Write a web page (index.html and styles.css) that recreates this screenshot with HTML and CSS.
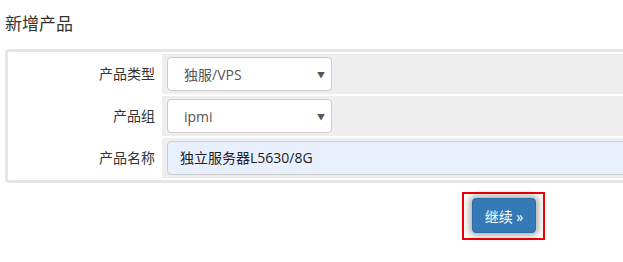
FILE: index.html
```html
<!DOCTYPE html>
<html>
<head>
<meta charset="utf-8">
<link rel="stylesheet" href="styles.css">
</head>
<body>
<div class="page">
  <h3 class="title">新增产品</h3>
  <div class="box">
    <div class="row">
      <div class="label">产品类型</div>
      <div class="field">
        <div class="select"><span>独服/VPS</span><span class="arrow">▼</span></div>
      </div>
    </div>
    <div class="row">
      <div class="label">产品组</div>
      <div class="field">
        <div class="select"><span>ipmi</span><span class="arrow">▼</span></div>
      </div>
    </div>
    <div class="row">
      <div class="label">产品名称</div>
      <div class="field">
        <div class="input">独立服务器L5630/8G</div>
      </div>
    </div>
  </div>
  <div class="actions">
    <div class="highlight">
      <button class="btn">继续 »</button>
    </div>
  </div>
</div>
</body>
</html>
```

FILE: styles.css
```css
html, body {
  margin: 0;
  padding: 0;
  background: #fff;
  overflow: hidden;
}
body {
  font-family: "Open Sans", "Noto Sans CJK SC", sans-serif;
  font-size: 14px;
  color: #333;
}
.page {
  width: 623px;
  height: 262px;
  overflow: hidden;
}
.title {
  margin: 0;
  padding: 12px 0 0 5px;
  height: 49px;
  box-sizing: border-box;
  font-size: 17px;
  font-weight: normal;
  line-height: 24px;
  color: #333;
}
.box {
  margin-left: 5px;
  width: 760px;
  border: 3px solid #e3e7e9;
  border-radius: 4px;
  padding: 2px;
  display: flex;
  flex-direction: column;
  gap: 2px;
  background: #fff;
}
.row {
  display: flex;
  gap: 2px;
  height: 40px;
}
.label {
  width: 150px;
  flex: none;
  text-align: right;
  padding-right: 5px;
  box-sizing: border-box;
  line-height: 40px;
  color: #333;
}
.field {
  flex: 1;
  background: #eeeeee;
  padding: 3px 5px;
  box-sizing: border-box;
}
.select {
  width: 165px;
  height: 34px;
  box-sizing: border-box;
  border: 1px solid #cccccc;
  border-radius: 4px;
  background: #fff;
  display: flex;
  align-items: center;
  justify-content: space-between;
  padding: 0 6px 0 16px;
  color: #555;
}
.arrow {
  font-size: 8px;
  color: #555;
}
.input {
  height: 34px;
  box-sizing: border-box;
  border: 1px solid #cccccc;
  border-radius: 4px;
  background: #e8f0fe;
  line-height: 32px;
  padding-left: 12px;
  color: #222;
}
.actions {
  display: flex;
  padding: 9px 0 0 462px;
}
.highlight {
  border: 2px solid #ee0000;
  padding: 4px 7px 5px 8px;
}
.btn {
  width: 64px;
  height: 35px;
  border: 1px solid #2e6da4;
  border-radius: 4px;
  background: #337ab7;
  color: #fff;
  font-family: "Open Sans", "Noto Sans CJK SC", sans-serif;
  font-size: 14px;
  padding: 0;
  box-shadow: 0 0 6px 3px rgba(0, 0, 0, 0.3);
  display: block;
}
```
